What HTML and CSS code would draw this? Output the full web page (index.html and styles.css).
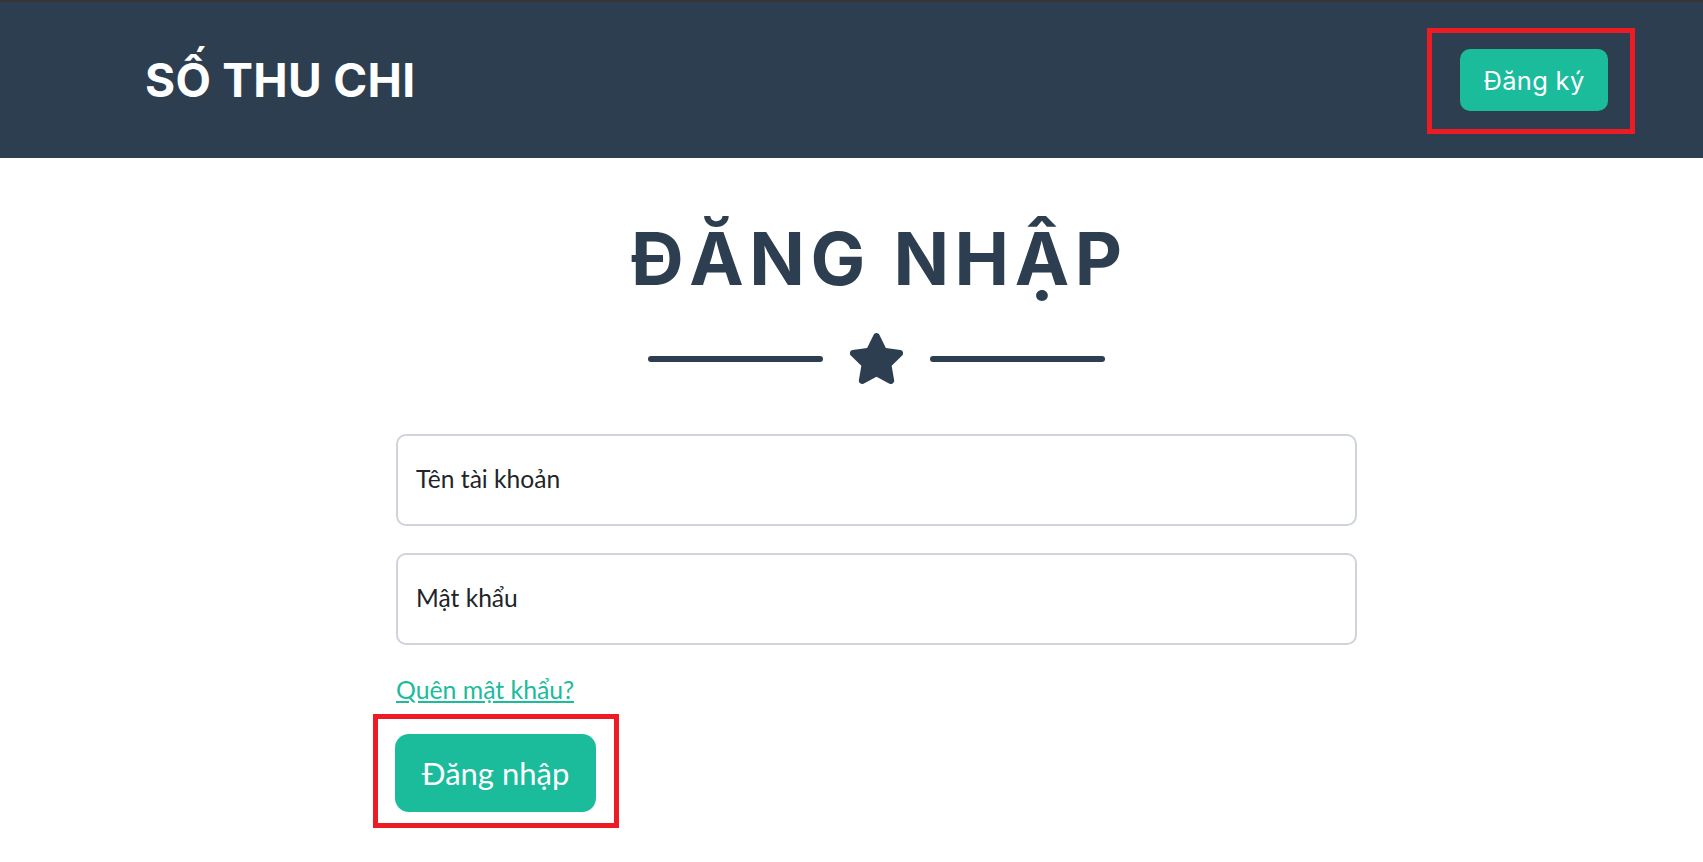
FILE: index.html
```html
<!DOCTYPE html>
<html lang="vi">
<head>
<meta charset="utf-8">
<title>Sổ Thu Chi - Đăng nhập</title>
<link rel="stylesheet" href="styles.css">
</head>
<body>
<header class="topbar">
  <div class="brand">SỐ THU CHI</div>
  <div class="mark mark-register">
    <a class="btn-register" href="#">Đăng ký</a>
  </div>
</header>
<main class="page">
  <h1 class="title">ĐĂNG NHẬP</h1>
  <div class="divider">
    <span class="divider-line"></span>
    <svg class="divider-star" viewBox="24 0 528 512" width="53" height="51" aria-hidden="true"><path fill="#2c3e50" d="M259.3 17.8L194 150.2 47.9 171.5c-26.2 3.8-36.7 36.1-17.7 54.6l105.7 103-25 145.5c-4.5 26.3 23.2 46 46.4 33.7L288 439.6l130.7 68.7c23.2 12.2 50.9-7.4 46.4-33.7l-25-145.5 105.7-103c19-18.5 8.5-50.8-17.7-54.6L382 150.2 316.7 17.8c-11.7-23.6-45.6-23.9-57.4 0z"/></svg>
    <span class="divider-line"></span>
  </div>
  <form class="login-form">
    <input class="field" type="text" placeholder="Tên tài khoản">
    <input class="field" type="password" placeholder="Mật khẩu">
    <a class="forgot" href="#">Quên mật khẩu?</a>
    <div class="mark mark-login">
      <button class="btn-login" type="button">Đăng nhập</button>
    </div>
  </form>
</main>
</body>
</html>
```

FILE: styles.css
```css
* { box-sizing: border-box; }
html, body { margin: 0; padding: 0; background: #fff; }
body { font-family: "Lato", "Liberation Sans", sans-serif; }

.topbar {
  border-top: 2px solid #363636;
  background: #2c3e50;
  height: 158px;
  display: flex;
  align-items: center;
  justify-content: space-between;
  padding: 0 68px 0 145px;
}
.brand {
  font-family: "Inter", "Noto Sans", sans-serif;
  font-weight: 700;
  font-size: 46px;
  letter-spacing: 0.3px;
  color: #fff;
  line-height: 1;
}
.mark { border: 5px solid #ed1c24; }
.mark-register {
  padding: 16px 22px 18px 28px;
  margin-top: 2px;
}
.btn-register {
  display: flex;
  align-items: center;
  justify-content: center;
  width: 148px;
  height: 62px;
  border-radius: 10px;
  background: #1abc9c;
  color: #fff;
  text-decoration: none;
  font-family: "Inter", "Noto Sans", sans-serif;
  font-size: 25.5px;
  letter-spacing: 0.3px;
}

.page {
  width: 961px;
  margin-left: 396px;
  padding-top: 64px;
}
.title {
  margin: 0;
  padding-left: 5.5px;
  text-align: center;
  font-family: "Inter", "Noto Sans", sans-serif;
  font-weight: 700;
  font-size: 73px;
  letter-spacing: 5.5px;
  line-height: 1;
  color: #2c3e50;
}
.divider {
  margin-top: 38px;
  display: flex;
  align-items: center;
  justify-content: center;
  gap: 27px;
}
.divider-line {
  width: 175px;
  height: 6px;
  border-radius: 3px;
  background: #2c3e50;
}
.divider-star { display: block; }

.login-form {
  margin-top: 50px;
  display: flex;
  flex-direction: column;
  align-items: flex-start;
}
.field {
  width: 100%;
  height: 92px;
  border: 2px solid #ced4da;
  border-radius: 10px;
  padding: 0 18px 4px;
  font-family: "Lato", sans-serif;
  font-size: 24.6px;
  color: #212529;
  background: #fff;
  outline: none;
}
.field + .field { margin-top: 27px; }
.field::placeholder { color: #212529; opacity: 1; }
.forgot {
  margin-top: 30px;
  font-size: 24.8px;
  line-height: 1.2;
  color: #1abc9c;
}
.mark-login {
  margin-top: 9px;
  margin-left: -23px;
  padding: 15px 18px 11px 17px;
}
.btn-login {
  display: flex;
  align-items: center;
  justify-content: center;
  width: 201px;
  height: 78px;
  border: none;
  border-radius: 14px;
  background: #1abc9c;
  color: #fff;
  font-family: "Lato", sans-serif;
  font-size: 31px;
  cursor: pointer;
}
```
